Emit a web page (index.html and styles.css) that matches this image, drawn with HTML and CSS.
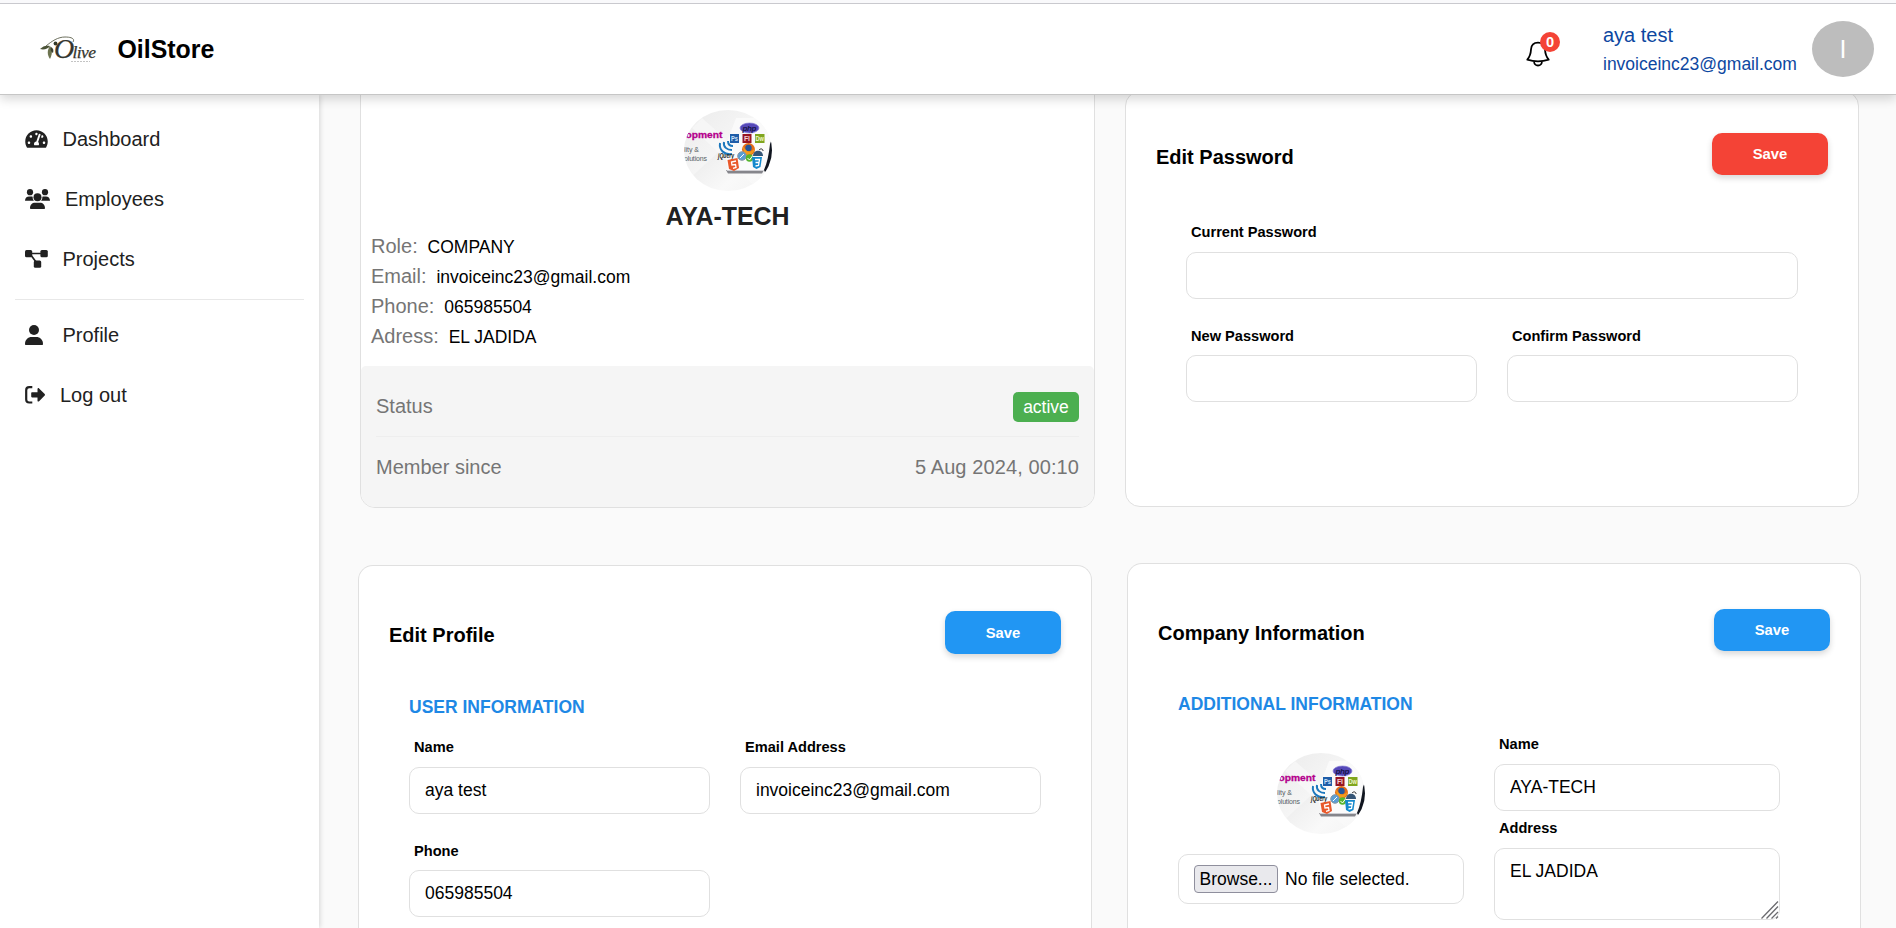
FILE: index.html
```html
<!DOCTYPE html>
<html lang="en">
<head>
<meta charset="utf-8">
<title>OilStore</title>
<link rel="stylesheet" href="styles.css">
</head>
<body>
<svg class="defs" width="0" height="0" aria-hidden="true">
  <defs>
    <linearGradient id="silver" x1="0" y1="0" x2="1" y2="1">
      <stop offset="0" stop-color="#ebebeb"/><stop offset=".45" stop-color="#f5f5f5"/><stop offset=".46" stop-color="#f0f0f0"/><stop offset=".7" stop-color="#f9f9f9"/><stop offset="1" stop-color="#f3f3f3"/>
    </linearGradient>
    <clipPath id="oval"><ellipse cx="44" cy="40.5" rx="44" ry="40.5"/></clipPath>
    <symbol id="company-photo" viewBox="0 0 88 81">
      <g clip-path="url(#oval)" font-family="Liberation Sans, Arial, sans-serif">
        <rect width="88" height="81" fill="url(#silver)"/>
        <path d="M18 8L88 70V81H76L8 18z" fill="#fafafa" opacity=".6"/>
        <path d="M52 8h30l4 18-6 34H44l-4-20z" fill="#fbfbfb" opacity=".8"/>
        <text x="1.500" y="28" font-size="9.600" font-weight="700" fill="#b4008c" stroke="#b4008c" stroke-width=".3" textLength="37" lengthAdjust="spacingAndGlyphs">opment</text>
        <text x="0" y="42" font-size="7" fill="#555f66" textLength="15">lity &amp;</text>
        <text x="0" y="50.500" font-size="7" fill="#555f66" textLength="23">olutions</text>
        <path d="M86 34l3-8v30l-8 6-1-2c3-7 5-16 6-26z" fill="#10151f"/>
        <path d="M42 60H80L78 63.500H44z" fill="#85858b"/>
        <path d="M43 60.500H80" stroke="#cfcfd4" stroke-width="1.200"/>
        <ellipse cx="65.500" cy="18" rx="9.500" ry="5" fill="#5548b8" stroke="#8d84d8" stroke-width=".7"/>
        <text x="58.500" y="20.600" font-size="8" font-style="italic" font-weight="700" fill="#15134a" textLength="14">php</text>
        <rect x="46" y="24" width="9" height="9" fill="#1f5da8"/><text x="47" y="31.400" font-size="7" font-weight="700" fill="#cfe4fb" textLength="7" lengthAdjust="spacingAndGlyphs">Ps</text>
        <rect x="58.500" y="24" width="9" height="9" fill="#971522"/><text x="60" y="31.400" font-size="7" font-weight="700" fill="#f6cfd2" textLength="6">Fl</text>
        <rect x="71" y="24" width="9.500" height="9" fill="#7fa51e"/><text x="71.500" y="31.400" font-size="7" font-weight="700" fill="#eef6cc" textLength="8.500" lengthAdjust="spacingAndGlyphs">Dw</text>
        <g fill="none" stroke="#1d78bd" stroke-width="2"><path d="M36 33c-1 7 4 12 12 11"/><path d="M40 32c-1 5 3 8 8 8"/><path d="M44 31c0 3 2 5 5 5"/></g>
        <text x="34" y="48" font-size="6.500" font-style="italic" font-weight="700" fill="#222" textLength="16" lengthAdjust="spacingAndGlyphs">jQuery</text>
        <circle cx="64.500" cy="39.500" r="6.500" fill="#e36b16"/><circle cx="64.500" cy="38" r="3.200" fill="#24569b"/>
        <path d="M59 36c4 8 9 6 12 2-1 5-4 7-7 7s-5-4-5-9z" fill="#f49b1c"/>
        <circle cx="58" cy="46" r="4.300" fill="#5b9ed4" stroke="#8b98a3"/><path d="M56 48l4-4" stroke="#fff"/>
        <circle cx="65.500" cy="48" r="3.700" fill="#58b62e"/><path d="M63.500 48l2 2 3-4" fill="none" stroke="#fff"/>
        <path d="M69 46c0-7 10-7 10 0z" fill="#365676"/><path d="M75 40c2-2 4-1 4 1" fill="none" stroke="#222"/>
        <path d="M43.500 50l10-2 1.500 10-5 3-5-2z" fill="#e9592b"/><path d="M52 51l-4.500 1 .5 3 3.500-.5.5 3-3 .8" fill="none" stroke="#fff" stroke-width="1.300"/>
        <path d="M68 47h10l-1.500 10-4 2-3.500-2z" fill="#1389cd"/><path d="M71 49.500h4.500l-.5 3h-3.500m3.500 0l-.5 3-3 .5" fill="none" stroke="#fff" stroke-width="1.300"/>
      </g>
    </symbol>
  </defs>
</svg>

<header class="topbar">
  <svg class="logo" width="64" height="34" viewBox="0 0 64 34">
    <path d="M6 10C12 5 18 1 25 1s10 2 8 5" fill="none" stroke="#5c604c" stroke-width=".9"/>
    <path d="M0 13c3-3 6-4 10-3-2 3-6 4-10 3z" fill="#4b5337"/>
    <path d="M10 10c-3 4-3 9 0 13 2-4 3-9 0-13z" fill="#6d7450"/>
    <path d="M11 11c2 1 3 3 2 6-2-1-3-3-2-6z" fill="#3b4030"/>
    <circle cx="15.500" cy="7.500" r="1.900" fill="#343a2a"/>
    <text x="14" y="22" class="logo-word"><tspan font-size="28">O</tspan><tspan x="32.500" font-size="17.500" letter-spacing="-.6">live</tspan></text>
    <path d="M31 25.500H50" stroke="#aaa" stroke-width=".7" stroke-dasharray="2 1"/>
  </svg>
  <span class="brand">OilStore</span>
  <div class="bell">
    <svg width="24" height="27" viewBox="0 0 24 27" fill="none" stroke="#000" stroke-width="1.800" stroke-linejoin="round">
      <path d="M1.300 18.700C4 15.500 4.800 12.500 5 8.500 5.300 4 8 1.700 12 1.700s6.700 2.300 7 6.800c.2 4 1 7 3.700 10.200C16 20.700 8 20.700 1.300 18.700z"/>
      <path d="M8 20.500c.3 2.500 2 4 4 4s3.700-1.500 4-4"/>
    </svg>
    <span class="count">0</span>
  </div>
  <div class="account">
    <span class="account-name">aya test</span>
    <span class="account-mail">invoiceinc23@gmail.com</span>
  </div>
  <div class="avatar">I</div>
</header>

<div class="shell">
  <nav class="sidebar">
    <a class="item">
      <svg width="23" height="20" viewBox="0 0 576 512" fill="#212121"><path d="M288 32C128.940 32 0 160.940 0 320c0 52.800 14.250 102.260 39.060 144.800 5.610 9.620 16.300 15.200 27.440 15.200h443c11.140 0 21.830-5.580 27.440-15.200C561.750 422.260 576 372.800 576 320c0-159.060-128.940-288-288-288zm0 64c14.710 0 26.580 10.130 30.320 23.650-1.110 2.260-2.640 4.230-3.450 6.670l-9.220 27.670c-5.130 3.490-10.970 6.010-17.640 6.010-17.670 0-32-14.330-32-32S270.330 96 288 96zM96 384c-17.670 0-32-14.330-32-32s14.330-32 32-32 32 14.330 32 32-14.330 32-32 32zm48-160c-17.670 0-32-14.330-32-32s14.330-32 32-32 32 14.330 32 32-14.330 32-32 32zm246.770-72.410l-61.330 184C343.130 347.330 352 364.540 352 384c0 11.720-3.380 22.550-8.880 32H232.880c-5.500-9.450-8.880-20.280-8.880-32 0-33.940 26.500-61.430 59.900-63.590l61.340-184.010c4.170-12.560 17.730-19.450 30.360-15.170 12.570 4.190 19.350 17.790 15.170 30.360zm14.660 57.200l15.520-46.550c3.470-1.290 7.130-2.230 11.050-2.230 17.670 0 32 14.330 32 32s-14.330 32-32 32c-11.380-.01-20.890-6.280-26.570-15.220zM480 384c-17.670 0-32-14.330-32-32s14.330-32 32-32 32 14.330 32 32-14.330 32-32 32z"/></svg>
      <span>Dashboard</span>
    </a>
    <a class="item">
      <svg width="25" height="20" viewBox="0 0 25 20" fill="#212121"><circle cx="5" cy="3.200" r="3.100"/><circle cx="20" cy="3.200" r="3.100"/><circle cx="12.500" cy="8.200" r="4"/><path d="M0 11.700C0 8.800 1.800 7.400 4 7.400h2c.7 0 1.200.1 1.700.4-.2 1.700.3 3 1.300 3.900zM25 11.700c0-2.900-1.800-4.300-4-4.300h-2c-.7 0-1.200.1-1.700.4.200 1.700-.3 3-1.300 3.900zM5 19.300c0-3.500 2.200-5.500 5-5.500h5c2.800 0 5 2 5 5.500 0 .5-.3.700-.8.700H5.800c-.5 0-.8-.2-.8-.7z"/></svg>
      <span class="near">Employees</span>
    </a>
    <a class="item">
      <svg width="23" height="18" viewBox="0 0 23 18" fill="#212121"><rect width="7.200" height="7.200" rx="1.500"/><rect x="15.400" width="7.400" height="7.200" rx="1.500"/><rect x="8.800" y="10.400" width="7.400" height="7.400" rx="1.500"/><path d="M5 3.500H18M5.500 4.500L11 12" stroke="#212121" stroke-width="1.700"/></svg>
      <span>Projects</span>
    </a>
    <hr class="rule">
    <a class="item">
      <svg width="18" height="20" viewBox="0 0 18 20" fill="#212121"><circle cx="9" cy="5" r="5"/><path d="M0 19c0-4.300 3-7 6.700-7h4.600C15 12 18 14.700 18 19c0 .6-.4 1-1 1H1c-.6 0-1-.4-1-1z"/></svg>
      <span class="wide">Profile</span>
    </a>
    <a class="item">
      <svg width="20" height="18" viewBox="0 0 20 18"><path d="M7.300 1.200H4.200a3 3 0 0 0-3 3v9.300a3 3 0 0 0 3 3h3.100" fill="none" stroke="#212121" stroke-width="2.200"/><path d="M7 6.300h5.500V3c0-.9 1-1.200 1.600-.6l5.600 5.700c.4.500.4 1 0 1.500l-5.600 5.700c-.6.600-1.600.3-1.600-.6v-3.300H7c-.5 0-.8-.3-.8-.8V7.100c0-.5.300-.8.800-.8z" fill="#212121"/></svg>
      <span class="near">Log out</span>
    </a>
  </nav>

  <main class="content">
    <div class="row top-row">
      <section class="card summary">
        <svg class="photo" width="88" height="81"><use href="#company-photo"/></svg>
        <h2 class="company">AYA-TECH</h2>
        <p class="fact"><span>Role:</span> COMPANY</p>
        <p class="fact"><span>Email:</span> invoiceinc23@gmail.com</p>
        <p class="fact"><span>Phone:</span> 065985504</p>
        <p class="fact"><span>Adress:</span> EL JADIDA</p>
        <div class="meta">
          <div class="meta-line first"><span>Status</span><span class="badge">active</span></div>
          <div class="meta-line"><span>Member since</span><span class="date">5 Aug 2024, 00:10</span></div>
        </div>
      </section>

      <section class="card form-card password">
        <div class="card-head"><h3>Edit Password</h3><button class="save danger">Save</button></div>
        <div class="fields">
          <label class="field full"><span>Current Password</span><input type="password"></label>
          <label class="field lower"><span>New Password</span><input type="password"></label>
          <label class="field lower"><span>Confirm Password</span><input type="password"></label>
        </div>
      </section>
    </div>

    <div class="row bottom-row">
      <section class="card form-card profile">
        <div class="card-head"><h3>Edit Profile</h3><button class="save tall">Save</button></div>
        <h4>USER INFORMATION</h4>
        <div class="fields">
          <label class="field"><span>Name</span><input type="text" value="aya test"></label>
          <label class="field"><span>Email Address</span><input type="text" value="invoiceinc23@gmail.com"></label>
          <label class="field lower"><span>Phone</span><input type="text" value="065985504"></label>
        </div>
      </section>

      <section class="card form-card info">
        <div class="card-head"><h3>Company Information</h3><button class="save">Save</button></div>
        <h4>ADDITIONAL INFORMATION</h4>
        <div class="fields">
          <div class="upload">
            <svg class="photo" width="88" height="81"><use href="#company-photo"/></svg>
            <div class="file"><button class="browse">Browse...</button><span>No file selected.</span></div>
          </div>
          <div class="stack">
            <label class="field"><span>Name</span><input type="text" value="AYA-TECH"></label>
            <label class="field address"><span>Address</span><textarea>EL JADIDA</textarea>
              <svg class="grip" width="18" height="18" viewBox="0 0 18 18" stroke="#6b6b6f" stroke-width="1.300"><path d="M.5 17.500L17 .500M5.500 17.500L17 5.500M10.500 17.500L17 11M15 17.500l2-2"/></svg>
            </label>
          </div>
        </div>
      </section>
    </div>
  </main>
</div>
</body>
</html>
```
FILE: styles.css
```css
* { box-sizing: border-box; }

body {
  margin: 0;
  height: 928px;
  overflow: hidden;
  display: flex;
  flex-direction: column;
  background: #fafafa;
  color: #000;
  font-family: "Liberation Sans", Arial, sans-serif;
  font-size: 20px;
}

.defs { position: absolute; }
h2, h3, h4, p { margin: 0; }

.topbar {
  position: relative;
  z-index: 2;
  flex: none;
  display: flex;
  align-items: flex-start;
  height: 95px;
  padding: 0 22px 0 40px;
  background: linear-gradient(#f9f9fb 0 3px, #c9c9ce 3px 4px, #fff 4px);
  border-bottom: 1px solid #c6c6c6;
  box-shadow: 0 4px 10px rgba(0, 0, 0, .16);
}

.logo { margin-top: 36px; overflow: visible; }
.logo-word { font-family: "Liberation Serif", serif; font-style: italic; fill: #34362f; stroke: #34362f; stroke-width: .25px; }
.brand { margin: 34px auto 0 13.500px; font-size: 24.900px; font-weight: 700; line-height: 30px; }

.bell { position: relative; margin: 41px 53px 0 0; width: 24px; height: 27px; }
.bell svg { display: block; }
.count {
  position: absolute;
  left: 14px;
  top: -9px;
  width: 20px;
  height: 20px;
  border-radius: 50%;
  background: #f44336;
  color: #fff;
  font-size: 14.600px;
  font-weight: 700;
  line-height: 20px;
  text-align: center;
}

.account { display: flex; flex-direction: column; margin: 20px 15px 0 0; color: #0d47a1; line-height: 30px; }
.account-mail { height: 28px; font-size: 17.500px; line-height: 28px; width: 194px; }
.avatar {
  width: 62px;
  height: 56px;
  margin-top: 21px;
  border-radius: 50%;
  background: #bdbdbd;
  color: #fff;
  font-size: 25px;
  line-height: 56px;
  text-align: center;
}

.shell { flex: 1; display: flex; min-height: 0; }

.sidebar {
  position: relative;
  z-index: 1;
  flex: none;
  width: 319px;
  padding: 14px 15px 0;
  background: #fff;
  box-shadow: 1px 0 5px rgba(0, 0, 0, .15);
}
.item { display: flex; align-items: center; gap: 14.500px; height: 60px; padding-left: 10px; color: #212121; line-height: 30px; }
.item .near { margin-left: .5px; }
.item .wide { margin-left: 5px; }
.rule { height: 1px; margin: 10px 0 5px; border: 0; background: #e8e8e8; }

.content { flex: 1; min-width: 0; padding-left: 39px; }
.row { display: flex; align-items: flex-start; }
.top-row { gap: 30px; padding-left: 2px; margin-top: -16px; }
.bottom-row { gap: 35px; margin-top: 55px; }

.card { flex: none; width: 734px; border: 1px solid #e0e0e0; border-radius: 15px; background: #fff; }

.summary { width: 735px; height: 429px; padding-top: 30px; }
.photo { display: block; margin: 0 auto; }
.company { height: 32px; margin-top: 8px; color: #212121; font-size: 24.900px; line-height: 34px; text-align: center; }
.fact { height: 30px; padding-left: 10px; font-size: 17.500px; line-height: 30px; }
.fact span { margin-right: 5px; color: #757575; font-size: 20px; }
.meta { height: 141px; margin-top: 15px; padding: 10px 15px; border-radius: 5px 5px 14px 14px; background: #f5f5f5; color: #757575; }
.meta-line { display: flex; align-items: center; justify-content: space-between; height: 61px; }
.meta-line.first { border-bottom: 1px solid #eee; }
.date { letter-spacing: .1px; }
.badge { width: 66px; height: 30px; margin-top: 2px; border-radius: 5px; background: #4caf50; color: #fff; font-size: 17.500px; line-height: 30px; text-align: center; }

.form-card { padding: 0 30px; }
.password { height: 416px; margin-top: 12px; padding-top: 41px; }
.profile, .info { padding-top: 45px; border-bottom: 0; border-radius: 15px 15px 0 0; }
.profile { height: 363px; margin-top: 2px; }
.info { height: 365px; }

.card-head { display: flex; justify-content: space-between; height: 43px; }
.card-head h3 { font-size: 20px; line-height: 48px; }
.save {
  width: 116px;
  height: 42px;
  padding: 0;
  border: 0;
  border-radius: 10px;
  background: #2196f3;
  color: #fff;
  font: 700 14.800px "Liberation Sans", Arial, sans-serif;
  box-shadow: 0 3px 6px rgba(0, 0, 0, .16);
}
.save.tall { height: 43px; }
.save.danger { background: #f44336; }

h4 { height: 24px; margin: 40px 20px 0; color: #1e88e5; font-size: 17.500px; line-height: 24px; }
.profile h4 { line-height: 26px; }

.fields { display: grid; grid-template-columns: 1fr 1fr; column-gap: 30px; row-gap: 24px; }
.password .fields { margin: 44px 30px 0; }
.profile .fields { margin: 17px 20px 0; }
.info .fields { margin: 16px 50px 0 20px; }

.field { position: relative; display: flex; flex-direction: column; font-size: 14.600px; font-weight: 700; }
.field.full { grid-column: 1 / -1; }
.field span { height: 32px; padding-left: 5px; line-height: 24px; }
.field.lower span { line-height: 26px; }
input, textarea {
  display: block;
  width: 100%;
  height: 47px;
  padding: 0 15px;
  border: 1px solid #e0e0e0;
  border-radius: 10px;
  background: #fff;
  color: #000;
  font: 17.500px "Liberation Sans", Arial, sans-serif;
}
textarea { height: 72px; padding-top: 12px; resize: none; overflow: hidden; }
.address { margin-top: 5px; }
.grip { position: absolute; right: 1px; bottom: 1px; }

.upload { padding-top: 21px; }
.file { display: flex; align-items: center; height: 50px; margin-top: 20px; padding-left: 15px; border: 1px solid #e0e0e0; border-radius: 10px; font-size: 17.500px; }
.browse { width: 84px; height: 28px; margin-right: 7px; padding: 0; border: 1px solid #8f8f9d; border-radius: 4px; background: #e9e9ed; color: #000; font: 17.500px "Liberation Sans", Arial, sans-serif; }
```
